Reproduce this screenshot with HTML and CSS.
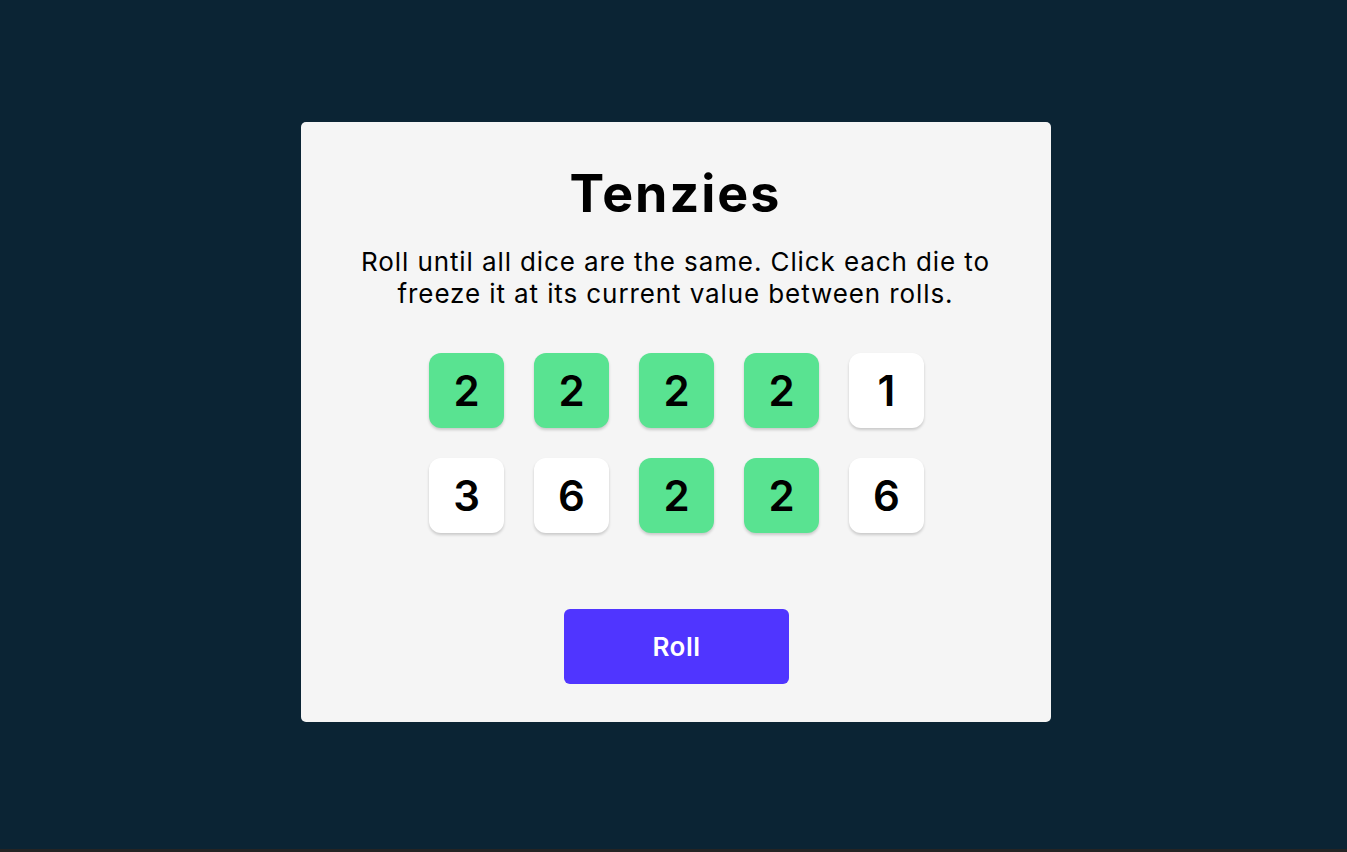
FILE: index.html
```html
<!DOCTYPE html>
<html lang="en">
<head>
<meta charset="utf-8">
<title>Tenzies</title>
<link rel="stylesheet" href="styles.css">
</head>
<body>
<div class="page">
  <main class="card">
    <h1 class="title">Tenzies</h1>
    <p class="instructions">Roll until all dice are the same. Click each die to freeze it at its current value between rolls.</p>
    <div class="dice">
      <button class="die held">2</button>
      <button class="die held">2</button>
      <button class="die held">2</button>
      <button class="die held">2</button>
      <button class="die">1</button>
      <button class="die">3</button>
      <button class="die">6</button>
      <button class="die held">2</button>
      <button class="die held">2</button>
      <button class="die">6</button>
    </div>
    <button class="roll">Roll</button>
  </main>
</div>
</body>
</html>
```
FILE: styles.css
```css
html {
  background: #242424;
  height: 100%;
}
body {
  margin: 0;
  height: 849px;
  background: #0B2434;
  font-family: "Inter", "Liberation Sans", sans-serif;
}
.page {
  display: flex;
  justify-content: center;
  padding-top: 122px;
  padding-left: 4px;
}
.card {
  width: 750px;
  height: 600px;
  box-sizing: border-box;
  background: #F5F5F5;
  border-radius: 5px;
  padding-top: 46px;
  display: flex;
  flex-direction: column;
  align-items: center;
}
.title {
  margin: 0;
  font-size: 52px;
  line-height: 52px;
  font-weight: 700;
  letter-spacing: 2px;
  color: #000;
}
.instructions {
  margin: 26px 0 0;
  width: 670px;
  text-align: center;
  font-size: 26px;
  line-height: 32px;
  font-weight: 400;
  letter-spacing: 0.9px;
  color: #000;
}
.dice {
  margin: 43px 0 0 2px;
  display: grid;
  grid-template-columns: repeat(5, 75px);
  grid-auto-rows: 75px;
  gap: 30px;
}
.die {
  border: none;
  border-radius: 12px;
  background: #FFFFFF;
  box-shadow: 0 2px 3px rgba(0, 0, 0, 0.18);
  font-family: "Inter", "Liberation Sans", sans-serif;
  font-size: 42px;
  font-weight: 600;
  color: #000;
  padding: 0;
  display: flex;
  align-items: center;
  justify-content: center;
}
.die.held {
  background: #59E391;
}
.roll {
  margin: 76px 0 0 2px;
  width: 225px;
  height: 75px;
  border: none;
  border-radius: 6px;
  background: #5035FF;
  color: #fff;
  font-family: "Inter", "Liberation Sans", sans-serif;
  font-size: 26px;
  font-weight: 600;
  letter-spacing: 0.5px;
}
```
